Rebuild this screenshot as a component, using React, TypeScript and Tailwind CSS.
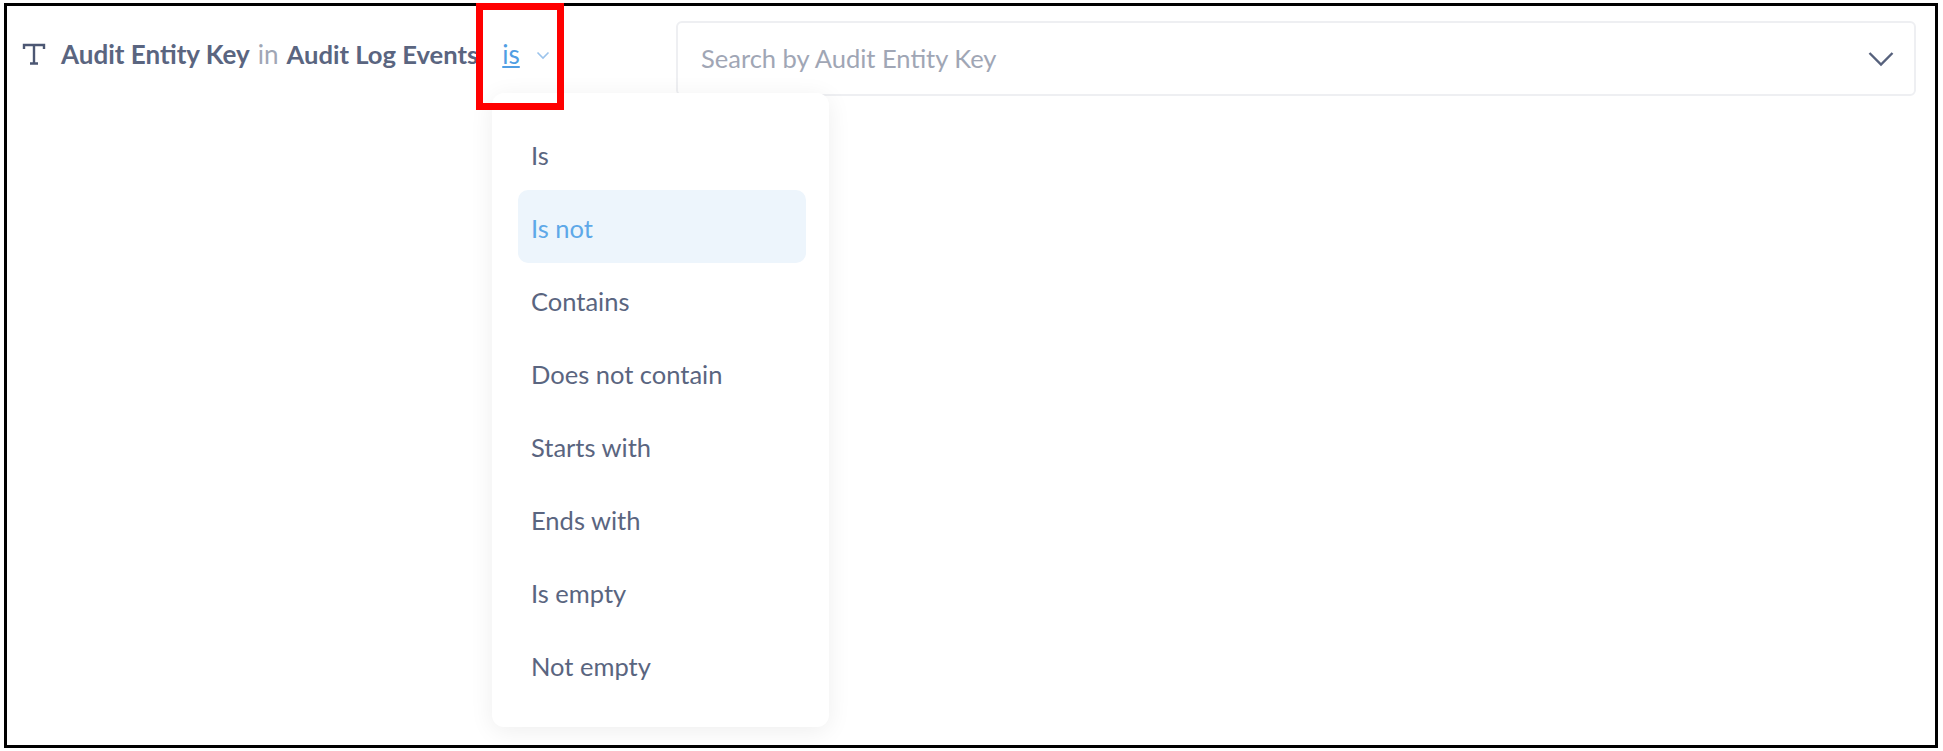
import React from "react";

const items = ["Is", "Is not", "Contains", "Does not contain", "Starts with", "Ends with", "Is empty", "Not empty"];

export default function App() {
  return (
    <div className="h-[751px] w-[1943px] bg-white pl-[4px] pr-[5px] pt-[3px] pb-[3px] font-['Lato',sans-serif]">
      <div className="relative flex h-full w-full items-start border-[3px] border-black pl-[14px] pr-[19px] pt-[15px]">
        <div className="flex h-[44px] w-[655px] shrink-0 items-center pt-[22px] text-[26px] text-[#5a6580]">
          <svg width="26" height="26" viewBox="0 0 26 26" fill="none" stroke="#4c5773" strokeWidth="2.4" className="mr-[14px] shrink-0">
            <path d="M3 8V4h20v4M13 4v18M9 22.5h8" />
          </svg>
          <span className="font-bold whitespace-nowrap">Audit Entity Key</span>
          <span className="ml-[8px] text-[#a0a6b5]">in</span>
          <span className="ml-[8px] font-bold whitespace-nowrap text-[25.6px]">Audit Log Events</span>
          <span className="ml-[24px] text-[#509ee3] underline">is</span>
          <svg width="14" height="14" viewBox="0 0 14 14" fill="none" stroke="#9cc4ec" strokeWidth="1.6" className="ml-[16px] mt-[2px]">
            <path d="M1.5 4.5 7 10l5.5-5.5" />
          </svg>
        </div>
        <div className="flex h-[75px] flex-1 items-center justify-between rounded-[6px] border-2 border-[#eeeff2] pl-[23px] pr-[20px] text-[25.5px] text-[#a0a6b5]">
          <span>Search by Audit Entity Key</span>
          <svg width="26" height="16" viewBox="0 0 26 16" fill="none" stroke="#56617c" strokeWidth="2.4">
            <path d="M1.5 2 13 13.5 24.5 2" />
          </svg>
        </div>
        <div className="absolute left-[485px] top-[87px] flex h-[634px] w-[337px] flex-col rounded-[12px] bg-white pl-[26px] pr-[23px] pt-[24px] shadow-[0_4px_24px_rgba(0,0,0,0.07)]">
          {items.map((item) => (
            <div
              key={item}
              className={
                item === "Is not"
                  ? "flex h-[73px] shrink-0 items-center rounded-[10px] bg-[#edf5fc] pl-[13px] pr-[14px] pt-[3px] text-[25.5px] text-[#5ea8e8]"
                  : "flex h-[73px] shrink-0 items-center pl-[13px] pr-[14px] pt-[3px] text-[25.5px] text-[#5a6580]"
              }
            >
              {item}
            </div>
          ))}
        </div>
        <div className="absolute left-[469px] top-[-3px] h-[107px] w-[88px] border-[7px] border-[#ff0000]" />
      </div>
    </div>
  );
}
